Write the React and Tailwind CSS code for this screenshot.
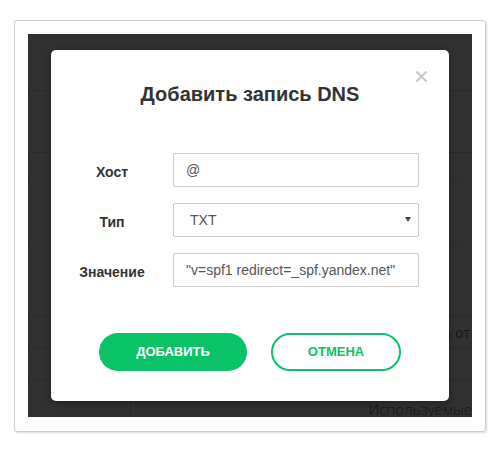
import React from "react";

const font = { fontFamily: '"Liberation Sans", Arial, sans-serif' };

const Field = ({ label, children }) => (
    <div className="flex items-center h-[34px]">
        <div className="w-[122px] shrink-0 pt-1 text-center text-[14px] font-bold text-[#333]">
            {label}
        </div>
        <div className="w-[246px] h-full">{children}</div>
    </div>
);

const App = () => {
    return (
        <div className="w-[501px] h-[449px] bg-white pt-5 pl-[14px]" style={font}>

            {/* window frame */}
            <div className="w-[472px] h-[412px] border border-[#cdcdcd] rounded-[3px] shadow-[1px_1px_2px_rgba(0,0,0,0.15)] p-[13px]">

                {/* page under backdrop */}
                <div className="relative w-[444px] h-[383px] overflow-hidden bg-[#313131]">

                    <div className="flex flex-col">
                        <div className="h-[57px] border-b border-[#2a2a2a]" />
                        <div className="h-[62px] border-b border-[#2a2a2a]" />
                        <div className="h-[31px] border-b border-[#2e2e2e]" />
                        <div className="h-[62px] border-b border-[#2e2e2e]" />
                        <div className="h-[70px] border-b border-[#2a2a2a]" />
                        <div className="h-[33px] border-b border-[#2a2a2a] flex items-center justify-end pr-[2px] text-[14px] text-[#161616]" style={{ fontFamily: '"Open Sans", sans-serif' }}>
                            Получить от
                        </div>
                        <div className="h-[32px] border-b border-[#2a2a2a]" />
                        <div className="h-[36px] flex" style={{ fontFamily: '"Open Sans", sans-serif' }}>
                            <div className="w-[103px] border-r border-[#2a2a2a] relative overflow-hidden">
                                <div className="absolute left-0 top-[27px] text-[15px] text-[#161616] whitespace-nowrap">
                                    по умолчанию
                                </div>
                            </div>
                            <div className="flex-1 flex justify-end items-start pt-[21px] text-[15px] font-light text-[#141414] leading-none whitespace-nowrap">
                                Используемые
                            </div>
                        </div>
                    </div>

                    {/* modal */}
                    <div className="absolute left-[23px] top-[16px] w-[398px] h-[351px] bg-white rounded-[5px] shadow-[0_2px_8px_rgba(0,0,0,0.35)] pt-8">

                        <button className="absolute right-[21px] top-[20px] text-[#c8c8c8]">
                            <svg width="13" height="13" viewBox="0 0 13 13">
                                <path d="M1.5 1.5 L11.5 11.5 M11.5 1.5 L1.5 11.5" stroke="currentColor" strokeWidth="2" />
                            </svg>
                        </button>

                        <h2 className="text-center text-[20px] leading-6 font-bold text-[#333]">
                            Добавить запись DNS
                        </h2>

                        <div className="mt-[47px] flex flex-col gap-4">

                            <Field label="Хост">
                                <input
                                    readOnly
                                    defaultValue="@"
                                    className="w-full h-full border border-[#ccc] rounded-[2px] px-3 text-[14px] text-[#555] outline-none"
                                    style={font}
                                />
                            </Field>

                            <Field label="Тип">
                                <div className="relative h-full">
                                    <select
                                        defaultValue="TXT"
                                        className="w-full h-full appearance-none border border-[#ccc] rounded-[2px] pl-4 text-[14px] text-[#555] bg-white outline-none"
                                        style={font}
                                    >
                                        <option>TXT</option>
                                    </select>
                                    <svg className="absolute right-2 top-[14px] pointer-events-none" width="6" height="6" viewBox="0 0 6 6">
                                        <path d="M0 0 H6 L3 5 Z" fill="#444" />
                                    </svg>
                                </div>
                            </Field>

                            <Field label="Значение">
                                <input
                                    readOnly
                                    defaultValue={'"v=spf1 redirect=_spf.yandex.net"'}
                                    className="w-full h-full border border-[#ccc] rounded-[2px] px-3 text-[14px] text-[#555] outline-none"
                                    style={font}
                                />
                            </Field>

                        </div>

                        {/* buttons */}
                        <div className="mt-[46px] flex justify-center gap-6">
                            <button className="w-[148px] h-[38px] rounded-full bg-[#0ac366] text-white text-[13px] font-bold uppercase">
                                Добавить
                            </button>
                            <button className="w-[130px] h-[38px] rounded-full border-2 border-[#0ac366] bg-white text-[#0ac366] text-[13px] font-bold uppercase">
                                Отмена
                            </button>
                        </div>

                    </div>

                </div>

            </div>

        </div>
    );
};

export default App;
